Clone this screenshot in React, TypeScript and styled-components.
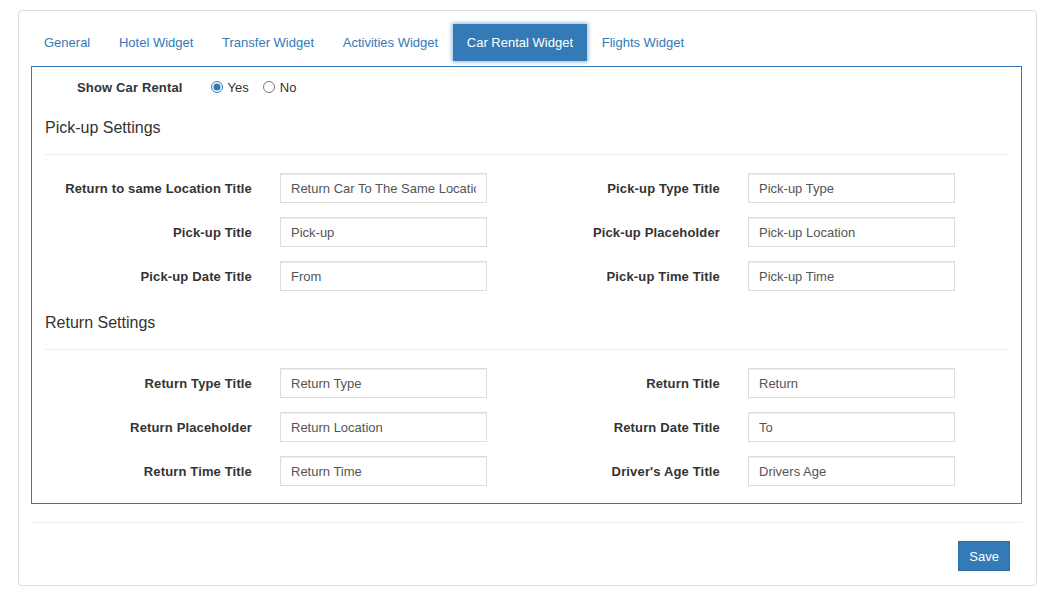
import React from "react";
import styled, { createGlobalStyle } from "styled-components";

const GlobalStyle = createGlobalStyle`
  body {
    margin: 0;
    background-color: #fff;
    font-family: "Liberation Sans", Arial, sans-serif;
    font-size: 13px;
    color: #333;
  }
`;

const Card = styled.div`
  width: 1019px;
  margin: 10px 0 0 18px;
  box-sizing: border-box;
  border: 1px solid #ddd;
  border-radius: 4px;
  box-shadow: 0 1px 1px rgba(0, 0, 0, 0.05);
  padding: 13px 14px 14px 12px;
`;

const Tabs = styled.ul`
  display: flex;
  list-style: none;
  margin: 0 0 5px -1px;
  padding: 0;
`;

const Tab = styled.li<{ $active?: boolean }>`
  height: 37px;
  line-height: 38px;
  padding: 0 14px;
  margin-right: 0.7px;
  cursor: pointer;
  color: ${(p) => (p.$active ? "#fff" : "#337ab7")};
  background: ${(p) => (p.$active ? "#337ab7" : "transparent")};
  box-shadow: ${(p) =>
    p.$active ? "0 0 4px 1px rgba(51, 122, 183, 0.55)" : "none"};
`;

const Panel = styled.div`
  border: 1px solid #337ab7;
  padding: 10px 13px 17px;
`;

const ShowRow = styled.div`
  display: flex;
  align-items: center;
  height: 20px;
  padding-left: 32px;
`;

const ShowLabel = styled.span`
  font-weight: bold;
  letter-spacing: 0.15px;
  margin-right: 28px;
`;

const RadioLabel = styled.label`
  display: flex;
  align-items: center;
  margin-right: 14px;
  cursor: pointer;

  input {
    margin: 0 5px 0 0;
    width: 12px;
    height: 12px;
    accent-color: #337ab7;
  }
`;

const SectionTitle = styled.h4<{ $top: number }>`
  margin: ${(p) => p.$top}px 0 0;
  padding-top: 1px;
  font-size: 16px;
  font-weight: normal;
  line-height: 21px;
  color: #333;
`;

const Divider = styled.hr`
  border: 0;
  border-top: 1px solid #eee;
  margin: 16px 0 18px;
`;

const FieldGrid = styled.div`
  display: grid;
  grid-template-columns: 468px 468px;
  row-gap: 14px;
`;

const Field = styled.div`
  display: grid;
  grid-template-columns: 207px 207px;
  column-gap: 28px;
  align-items: center;
`;

const FieldLabel = styled.label`
  text-align: right;
  font-weight: bold;
  letter-spacing: 0.15px;
  color: #333;
`;

const TextInput = styled.input`
  height: 30px;
  box-sizing: border-box;
  width: 207px;
  padding: 0 10px;
  border: 1px solid #ddd;
  border-radius: 0;
  box-shadow: inset 0 1px 1px rgba(0, 0, 0, 0.075);
  font-family: "Liberation Sans", Arial, sans-serif;
  font-size: 13px;
  color: #555;
  outline: none;
`;

const Footer = styled.div`
  border-top: 1px solid #eee;
  margin-top: 18px;
  padding: 18px 12px 0 0;
  display: flex;
  justify-content: flex-end;
`;

const SaveButton = styled.button`
  height: 30px;
  padding: 0 10px;
  border: 1px solid #2e6da4;
  border-radius: 0;
  background: #337ab7;
  color: #fff;
  font-family: "Liberation Sans", Arial, sans-serif;
  font-size: 13px;
  cursor: pointer;
`;

const tabs = [
  "General",
  "Hotel Widget",
  "Transfer Widget",
  "Activities Widget",
  "Car Rental Widget",
  "Flights Widget",
];

const pickupFields = [
  ["Return to same Location Title", "Return Car To The Same Location"],
  ["Pick-up Type Title", "Pick-up Type"],
  ["Pick-up Title", "Pick-up"],
  ["Pick-up Placeholder", "Pick-up Location"],
  ["Pick-up Date Title", "From"],
  ["Pick-up Time Title", "Pick-up Time"],
];

const returnFields = [
  ["Return Type Title", "Return Type"],
  ["Return Title", "Return"],
  ["Return Placeholder", "Return Location"],
  ["Return Date Title", "To"],
  ["Return Time Title", "Return Time"],
  ["Driver's Age Title", "Drivers Age"],
];

function Fields({ items }: { items: string[][] }) {
  return (
    <FieldGrid>
      {items.map(([label, value]) => (
        <Field key={label}>
          <FieldLabel>{label}</FieldLabel>
          <TextInput type="text" defaultValue={value} />
        </Field>
      ))}
    </FieldGrid>
  );
}

function App() {
  const [active, setActive] = React.useState("Car Rental Widget");
  const [show, setShow] = React.useState("yes");

  return (
    <Card>
      <GlobalStyle />
      <Tabs>
        {tabs.map((t) => (
          <Tab key={t} $active={t === active} onClick={() => setActive(t)}>
            {t}
          </Tab>
        ))}
      </Tabs>
      <Panel>
        <ShowRow>
          <ShowLabel>Show Car Rental</ShowLabel>
          <RadioLabel>
            <input
              type="radio"
              name="show"
              checked={show === "yes"}
              onChange={() => setShow("yes")}
            />
            Yes
          </RadioLabel>
          <RadioLabel>
            <input
              type="radio"
              name="show"
              checked={show === "no"}
              onChange={() => setShow("no")}
            />
            No
          </RadioLabel>
        </ShowRow>
        <SectionTitle $top={19}>Pick-up Settings</SectionTitle>
        <Divider />
        <Fields items={pickupFields} />
        <SectionTitle $top={20}>Return Settings</SectionTitle>
        <Divider />
        <Fields items={returnFields} />
      </Panel>
      <Footer>
        <SaveButton>Save</SaveButton>
      </Footer>
    </Card>
  );
}

export default App;
